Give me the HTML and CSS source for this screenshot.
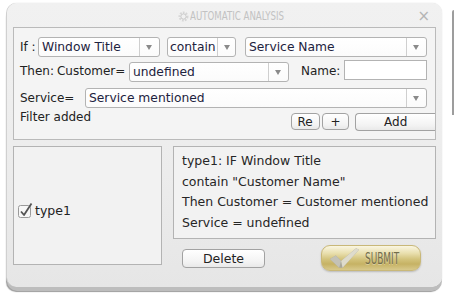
FILE: index.html
```html
<!DOCTYPE html>
<html lang="en">
<head>
    <meta charset="UTF-8">
    <title>Automatic Analysis</title>
    <link rel="stylesheet" href="styles.css">
</head>
<body>
    <div class="desk">
        <!-- Окно анализа -->
        <div class="window">
            <div class="titlebar">
                <span></span>
                <span class="title">
                    <svg class="gear" width="11" height="11" viewBox="0 0 11 11">
                        <circle cx="5.5" cy="5.5" r="3.8" fill="none" stroke="#d6d6d6" stroke-width="2.4" stroke-dasharray="1.7 1.1"/>
                        <circle cx="5.5" cy="5.5" r="2.6" fill="none" stroke="#cdcdcd" stroke-width="1"/>
                    </svg>
                    <span class="title-text">AUTOMATIC ANALYSIS</span>
                </span>
                <span class="close">&times;</span>
            </div>

            <div class="panel">
                <div class="row row-if">
                    <span class="label label-if">If :</span>
                    <div class="select sel-field"><span>Window Title</span><i class="arrow"></i></div>
                    <div class="select sel-op"><span>contain</span><i class="arrow"></i></div>
                    <div class="select sel-value"><span>Service Name</span><i class="arrow"></i></div>
                </div>
                <div class="row row-then">
                    <span class="label">Then:</span>
                    <span class="label label-customer">Customer=</span>
                    <div class="select sel-customer"><span>undefined</span><i class="arrow"></i></div>
                    <span class="label label-name">Name:</span>
                    <input type="text" class="name-input">
                </div>
                <div class="row row-service">
                    <span class="label label-service">Service=</span>
                    <div class="select sel-service"><span>Service mentioned</span><i class="arrow"></i></div>
                </div>
                <div class="row row-status">
                    <span class="label status">Filter added</span>
                    <button class="btn btn-re">Re</button>
                    <button class="btn btn-plus">+</button>
                    <button class="btn btn-add">Add</button>
                </div>
            </div>

            <div class="lower">
                <div class="filters">
                    <label class="filter-item">
                        <svg class="check" width="16" height="16" viewBox="0 0 16 16">
                            <rect x="0.5" y="3.5" width="12" height="12" rx="2" fill="#f7f7f7" stroke="#9a9a9a"/>
                            <path d="M3 9.5 L6 13 L13.5 1.5" fill="none" stroke="#555" stroke-width="1.8" stroke-linejoin="round"/>
                        </svg>
                        type1
                    </label>
                </div>
                <div class="side">
                    <div class="summary">
                        <div>type1: IF Window Title</div>
                        <div>contain "Customer Name"</div>
                        <div>Then Customer = Customer mentioned</div>
                        <div>Service = undefined</div>
                    </div>
                    <div class="actions">
                        <button class="btn btn-delete">Delete</button>
                        <button class="submit">
                            <svg class="tick" width="32" height="22" viewBox="0 0 32 22">
                                <path d="M1 12 L7 8.5 L12.5 14 L28 1 L31 2.5 L14 21 L10.5 21 Z" fill="#a9a79b"/>
                                <path d="M12.5 14 L28 1 L31 2.5 L14 21 Z" fill="#dedbcc"/>
                                <path d="M1 12 L7 8.5 L12.5 14 L10.5 21 Z" fill="#c4c2b6"/>
                            </svg>
                            <span class="submit-text">SUBMIT</span>
                        </button>
                    </div>
                </div>
            </div>
        </div>
        <div class="behind"></div>
    </div>
</body>
</html>
```

FILE: styles.css
```css
body {
    margin: 0;
    background-color: #ffffff;
    font-family: "DejaVu Sans", sans-serif;
    font-size: 12px;
    color: #222;
}
.desk {
    position: relative;
    width: 454px;
    height: 301px;
    overflow: hidden;
}
.window {
    margin: 3px 0 0 7px;
    width: 435px;
    height: 284px;
    box-sizing: border-box;
    border-radius: 10px;
    background: linear-gradient(#f1f1f1, #ececec 60%, #e6e6e6);
    box-shadow: -1px 0 0 #d0d0d0, 0 4px 0 #bdbdbd, -1px 5px 1px #9c9c9c, 0 0 1px rgba(0,0,0,0.25);
}
.behind {
    position: absolute;
    left: 452px;
    top: 10px;
    width: 2px;
    height: 105px;
    background-color: #9d9d9d;
    border-radius: 2px 0 0 0;
}
.titlebar {
    height: 24px;
    display: grid;
    grid-template-columns: 1fr auto 1fr;
    align-items: center;
    padding: 0 12px 0 6px;
}
.title {
    margin-left: 22px;
    display: flex;
    align-items: center;
    padding-top: 2px;
}
.title-text {
    display: inline-block;
    width: 97px;
    font-family: "DejaVu Sans Condensed", sans-serif;
    font-size: 12px;
    color: #c2c2c2;
    white-space: nowrap;
    transform: scaleX(0.8);
    transform-origin: left center;
}
.gear {
    margin-right: 1px;
}
.close {
    justify-self: end;
    color: #b5b5b5;
    font-size: 15px;
    line-height: 15px;
    padding-top: 3px;
}
.panel {
    margin: 0 6px;
    height: 113px;
    box-sizing: border-box;
    border: 1px solid #bababa;
    background-color: #f4f4f4;
    padding: 9px 0 0 6px;
}
.row {
    display: flex;
    align-items: center;
}
.row-if {
    height: 20px;
}
.row-then {
    margin-top: 3px;
    height: 22px;
}
.row-service {
    margin-top: 6px;
    height: 20px;
}
.row-status {
    margin-top: 2px;
    align-items: flex-start;
}
.label {
    white-space: nowrap;
}
.label-if {
    width: 18px;
}
.label-customer {
    margin-left: 3px;
    width: 72px;
}
.label-name {
    margin-left: 12px;
    width: 43px;
}
.label-service {
    width: 65px;
}
.status {
    width: 272px;
}
.select {
    height: 20px;
    box-sizing: border-box;
    display: flex;
    border: 1px solid #b3b3b3;
    border-radius: 3px;
    background: linear-gradient(#ffffff, #fbfbfb);
    color: #1d2340;
    font-size: 12.3px;
}
.select span {
    flex: 1;
    padding-left: 3px;
    line-height: 18px;
    white-space: nowrap;
    overflow: hidden;
}
.arrow {
    width: 19px;
    border-left: 1px solid #cfcfcf;
    position: relative;
}
.arrow::after {
    content: "";
    position: absolute;
    left: 6px;
    top: 7px;
    border-left: 3.5px solid transparent;
    border-right: 3.5px solid transparent;
    border-top: 5px solid #8a8a8a;
}
.sel-field {
    width: 122px;
}
.sel-op {
    width: 69px;
    margin-left: 7px;
}
.sel-op .arrow {
    width: 17px;
}
.sel-op span {
    padding-left: 2px;
}
.sel-value {
    width: 182px;
    margin-left: 9px;
}
.sel-customer {
    width: 160px;
    align-self: flex-end;
}
.sel-service {
    width: 342px;
}
.name-input {
    width: 83px;
    height: 20px;
    box-sizing: border-box;
    align-self: flex-start;
    border: 1px solid #b3b3b3;
    background-color: #ffffff;
    margin: 0;
}
.btn {
    height: 17px;
    box-sizing: border-box;
    padding: 0;
    margin-top: 3px;
    border: 1px solid #a2a2a2;
    border-radius: 4px;
    background: linear-gradient(#ffffff, #f3f3f3 70%, #e9e9e9);
    font-family: "DejaVu Sans", sans-serif;
    font-size: 12px;
    line-height: 14px;
    color: #222;
}
.btn-re {
    width: 29px;
}
.btn-plus {
    width: 28px;
    margin-left: 2px;
}
.btn-add {
    width: 80px;
    height: 18px;
    margin-left: 6px;
    border-right: none;
    border-radius: 4px 0 0 4px;
}
.lower {
    display: flex;
    margin: 6px 0 0 6px;
    gap: 11px;
}
.filters {
    width: 149px;
    height: 119px;
    box-sizing: border-box;
    border: 1px solid #b3b3b3;
    background-color: #f2f2f2;
    display: flex;
    align-items: center;
    padding: 8px 0 0 4px;
}
.filter-item {
    display: flex;
    align-items: flex-end;
    gap: 1px;
    font-size: 12.5px;
    line-height: 14px;
}
.side {
    width: 263px;
}
.summary {
    height: 93px;
    box-sizing: border-box;
    border: 1px solid #b3b3b3;
    background-color: #f2f2f2;
    padding: 4px 0 0 8px;
    font-size: 12.5px;
    line-height: 20.5px;
    color: #262626;
    white-space: nowrap;
}
.actions {
    display: flex;
    align-items: center;
    height: 26px;
    margin-top: 6px;
}
.btn-delete {
    width: 83px;
    height: 19px;
    margin: 1px 0 0 9px;
    font-size: 12.5px;
}
.submit {
    width: 100px;
    height: 26px;
    margin-left: 56px;
    padding: 0 0 0 7px;
    display: flex;
    align-items: center;
    gap: 5px;
    border: 1px solid #c9b879;
    border-radius: 9px;
    background: linear-gradient(#faf6e2, #e9dfae 30%, #d3c37c 55%, #c6b264 75%, #d8c98c);
    box-shadow: 0 1px 2px rgba(0,0,0,0.2);
}
.submit-text {
    display: inline-block;
    font-family: "DejaVu Sans Condensed", sans-serif;
    font-size: 16px;
    color: #736d4b;
    text-shadow: 0 1px 0 rgba(255,255,255,0.35);
    transform: scaleX(0.62);
    transform-origin: left center;
}
```
